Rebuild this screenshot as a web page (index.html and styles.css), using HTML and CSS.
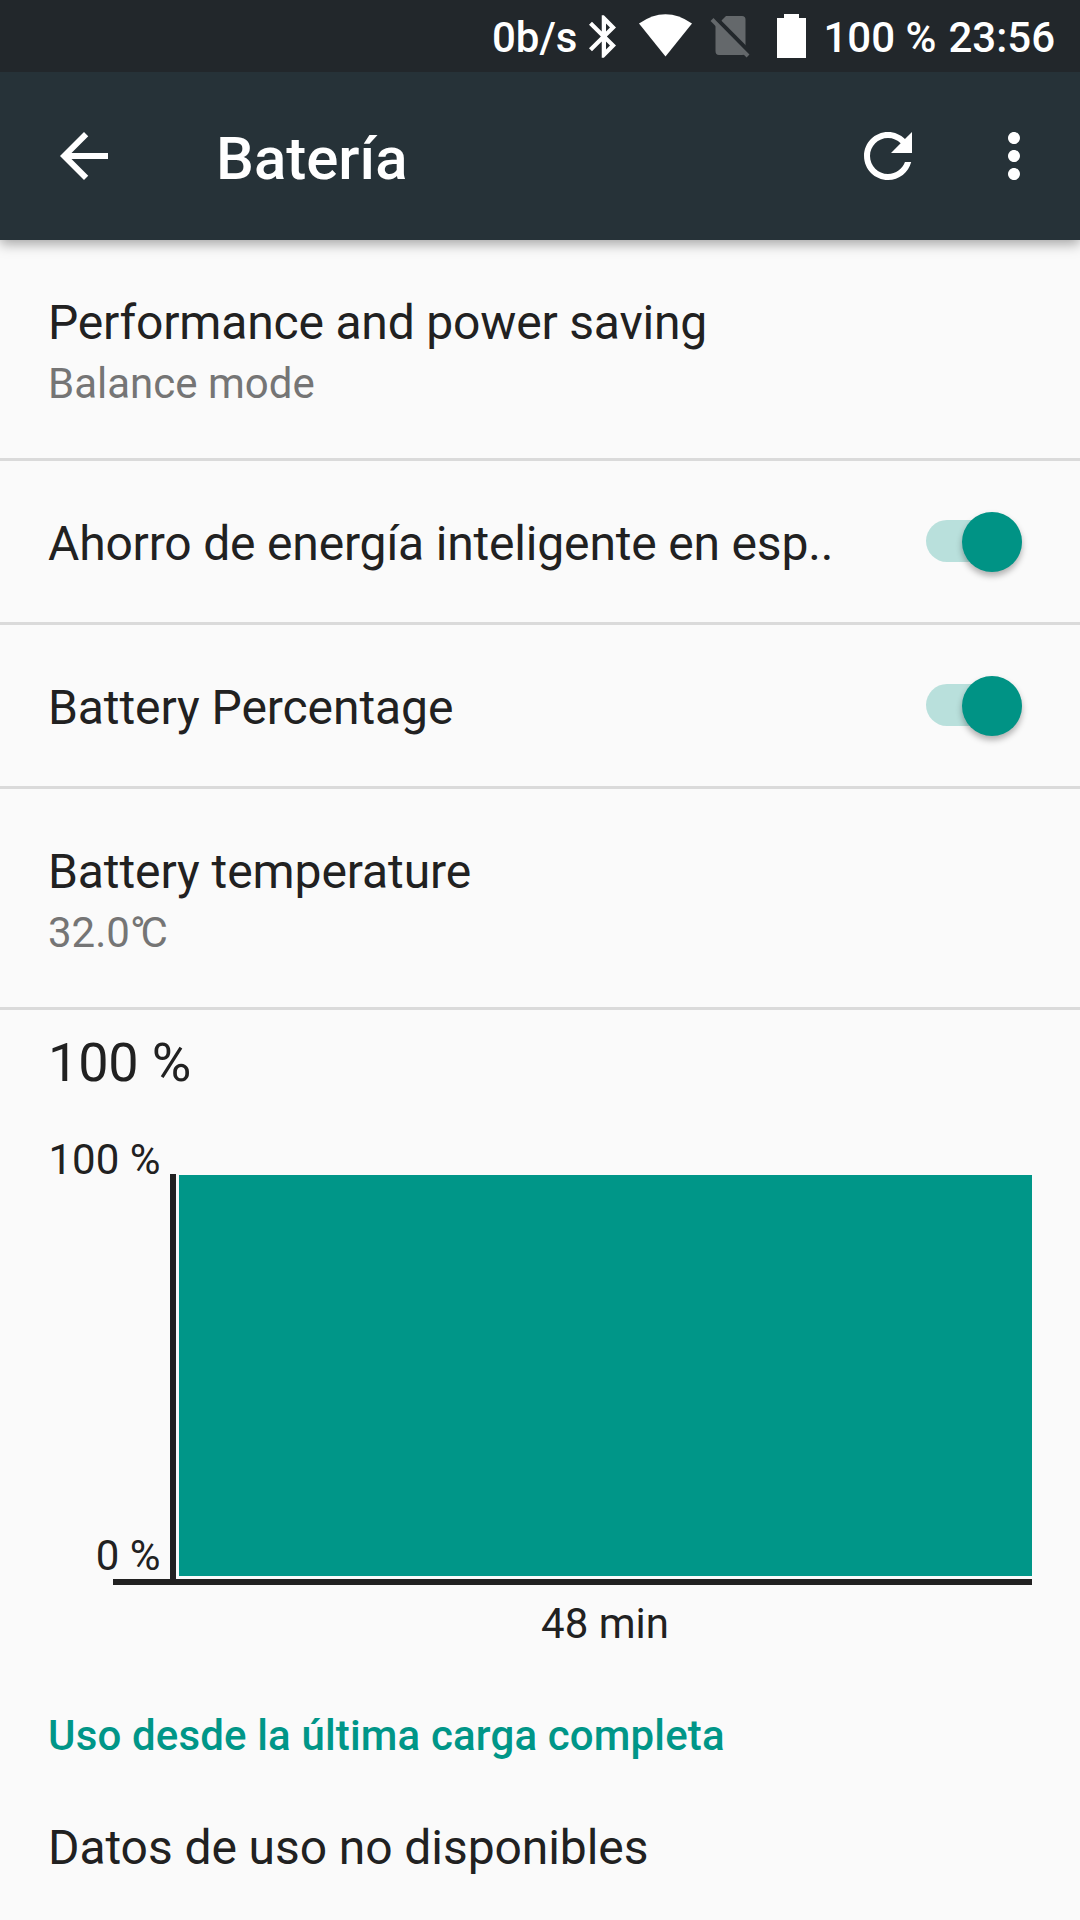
FILE: index.html
```
<!DOCTYPE html>
<html lang="es">
<head>
  <meta charset="UTF-8" />
  <meta name="viewport" content="width=device-width, initial-scale=1.0"/>
  <title>Batería</title>
  <link rel="stylesheet" href="styles.css">
</head>
<body>

  <!-- Status bar -->
  <div class="status-bar">
    <span class="net-speed">0b/s</span>
    <svg class="bluetooth" viewBox="5 2 12.710 20">
      <path d="M17.710 7.710L12 2h-1v7.590L6.410 5 5 6.410 10.590 12 5 17.590 6.410 19 11 14.410V22h1l5.710-5.710-4.300-4.290 4.300-4.290zM13 5.830l1.880 1.880L13 9.590V5.830zm1.880 10.460L13 18.170v-3.760l1.880 1.880z" fill="#fff"/>
    </svg>
    <svg class="wifi" viewBox="0 0 53 43">
      <path d="M0 9.500 Q26.500 -9 53 9.500 L26.500 42.500 Z" fill="#fff"/>
    </svg>
    <svg class="no-sim" viewBox="0 0 40 44">
      <path d="M12 6 L16 2 H32 Q35.500 2 35.500 5.500 V33 L10.500 8 Z M5.500 10 L35.500 40 Q34 41 32 41 H9 Q5.500 41 5.500 37 Z" fill="#64686b"/>
      <path d="M2 5.500 L38 42" stroke="#64686b" stroke-width="4"/>
      <path d="M7.500 5.200 L38 36" stroke="#22272b" stroke-width="3.500"/>
    </svg>
    <svg class="battery" viewBox="0 0 29 44">
      <path d="M7 0 H22 V4 H29 V44 H0 V4 H7 Z" fill="#fff"/>
    </svg>
    <span class="percent">100 %</span>
    <span class="clock">23:56</span>
  </div>

  <!-- App bar -->
  <header class="app-bar">
    <svg class="icon" viewBox="0 0 24 24">
      <path d="M20 11H7.830l5.590-5.590L12 4l-8 8 8 8 1.410-1.410L7.830 13H20v-2z"/>
    </svg>
    <h1>Batería</h1>
    <svg class="icon" viewBox="0 0 24 24">
      <path d="M17.650 6.350C16.200 4.900 14.210 4 12 4c-4.420 0-7.990 3.580-7.990 8s3.570 8 7.990 8c3.730 0 6.840-2.550 7.730-6h-2.080c-.82 2.330-3.040 4-5.650 4-3.310 0-6-2.690-6-6s2.690-6 6-6c1.660 0 3.140.69 4.220 1.780L13 11h7V4l-2.350 2.350z"/>
    </svg>
    <svg class="icon more" viewBox="0 0 24 24">
      <path d="M12 8c1.100 0 2-.9 2-2s-.9-2-2-2-2 .9-2 2 .9 2 2 2zm0 2c-1.100 0-2 .9-2 2s.9 2 2 2 2-.9 2-2-.9-2-2-2zm0 6c-1.100 0-2 .9-2 2s.9 2 2 2 2-.9 2-2-.9-2-2-2z"/>
    </svg>
  </header>

  <!-- Settings list -->
  <main>
    <div class="row two-line">
      <div class="row-text">
        <div class="title tight">Performance and power saving</div>
        <div class="summary">Balance mode</div>
      </div>
    </div>
    <div class="row">
      <div class="row-text">
        <div class="title tight">Ahorro de energía inteligente en esp..</div>
      </div>
      <div class="switch"><div class="thumb"></div></div>
    </div>
    <div class="row">
      <div class="row-text">
        <div class="title">Battery Percentage</div>
      </div>
      <div class="switch"><div class="thumb"></div></div>
    </div>
    <div class="row two-line">
      <div class="row-text">
        <div class="title">Battery temperature</div>
        <div class="summary">32.0<span class="degree">°</span>C</div>
      </div>
    </div>

    <!-- Battery history -->
    <section class="history">
      <div class="level">100 %</div>
      <div class="chart">
        <div class="scale">
          <span>100 %</span>
          <span>0 %</span>
        </div>
        <div class="plot">
          <div class="bar"></div>
        </div>
      </div>
      <div class="x-axis"></div>
      <div class="duration">48 min</div>
    </section>

    <h2>Uso desde la última carga completa</h2>
    <div class="title no-data">Datos de uso no disponibles</div>
  </main>

</body>
</html>
```
FILE: styles.css
```
* {
  box-sizing: border-box;
  margin: 0;
  padding: 0;
}

body {
  width: 1080px;
  height: 1920px;
  overflow: hidden;
  font-family: Roboto, sans-serif;
  font-size: 42px;
  color: #212121;
  background: #fafafa;
}

svg {
  display: block;
  flex: none;
}

/* Status bar */
.status-bar {
  position: relative;
  z-index: 2;
  display: flex;
  justify-content: flex-end;
  height: 72px;
  padding: 14px 25px 0 0;
  background: #22272b;
  color: #fff;
  font-weight: 500;
  line-height: 48px;
  white-space: nowrap;
}

.bluetooth {
  width: 27px;
  height: 43px;
  margin: 1px 23px 0 12px;
}

.wifi {
  width: 53px;
  height: 43px;
  margin-right: 18px;
}

.no-sim {
  width: 40px;
  height: 44px;
  margin-right: 27px;
}

.battery {
  width: 29px;
  height: 44px;
}

.percent {
  margin-left: 17px;
}

.clock {
  margin-left: 12px;
}

/* App bar */
.app-bar {
  position: relative;
  z-index: 1;
  display: flex;
  align-items: center;
  height: 168px;
  padding: 0 30px 0 48px;
  background: #263238;
  color: #fff;
  box-shadow: 0 4px 12px rgba(0, 0, 0, 0.35);
}

.app-bar h1 {
  flex: 1;
  margin: 4px 0 0 96px;
  font-size: 60px;
  font-weight: 500;
}

.icon {
  width: 72px;
  height: 72px;
  fill: #fff;
}

.more {
  margin-left: 54px;
}

/* Settings rows */
.row {
  display: flex;
  justify-content: space-between;
  height: 164px;
  padding: 51px 58px 0 48px;
  border-bottom: 3px solid #dadada;
}

.two-line {
  height: 221px;
}

.title {
  font-size: 48px;
  line-height: 64px;
  letter-spacing: -0.080px;
  white-space: nowrap;
}

.tight {
  letter-spacing: -0.180px;
}

.summary {
  line-height: 58px;
  color: #757575;
}

.degree {
  letter-spacing: -5px;
}

.switch {
  display: flex;
  justify-content: flex-end;
  align-items: center;
  width: 96px;
  height: 42px;
  margin-top: 8px;
  padding: 1px 0.500px 0 0;
  border-radius: 21px;
  background: #b9e0dc;
}

.thumb {
  flex: none;
  width: 60px;
  height: 60px;
  border-radius: 50%;
  background: #009385;
  box-shadow: 0 4px 6px rgba(0, 0, 0, 0.3);
}

/* Chart */
.history {
  padding: 0 48px;
}

.level {
  height: 164px;
  padding-top: 21px;
  font-size: 54px;
  line-height: 64px;
  letter-spacing: -0.200px;
}

.chart {
  display: flex;
  height: 405px;
}

.scale {
  display: flex;
  flex-direction: column;
  justify-content: space-between;
  align-items: flex-end;
  width: 122px;
  margin: -39px 0 -2px;
  padding-right: 9.500px;
  line-height: 50px;
  white-space: nowrap;
}

.plot {
  flex: 1;
  padding: 1px 0 3px 3px;
  border-left: 6px solid #212121;
}

.bar {
  height: 100%;
  background: #009688;
}

.x-axis {
  height: 6px;
  margin-left: 65px;
  background: #212121;
}

.duration {
  margin: 14px 0 0 130px;
  line-height: 50px;
  text-align: center;
}

h2 {
  margin: 62px 48px 0;
  font-size: 42px;
  font-weight: 500;
  line-height: 50px;
  letter-spacing: 0.150px;
  color: #009688;
}

.no-data {
  margin: 55px 48px 0;
}
```
